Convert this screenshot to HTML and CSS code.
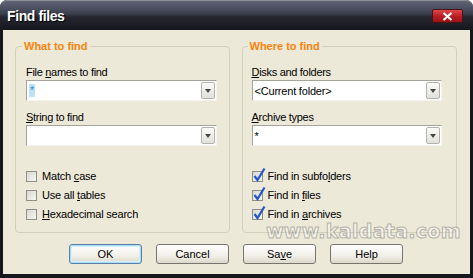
FILE: index.html
```html
<!DOCTYPE html>
<html lang="en">
<head>
  <meta charset="UTF-8" />
  <title>Find files</title>
  <link rel="stylesheet" href="styles.css">
</head>
<body>
  <div class="window">
    <div class="titlebar">
      <span class="title">Find files</span>
      <button class="close" aria-label="Close">
        <svg width="11" height="9" viewBox="0 0 11 9"><path d="M1.5 1 L9.5 8 M9.5 1 L1.5 8" stroke="#fff" stroke-width="2.2" fill="none"/></svg>
      </button>
    </div>

    <div class="client">
      <div class="groups">
        <fieldset class="group what">
          <legend>What to find</legend>
          <div class="field">
            <label class="field-label">File <u>n</u>ames to find</label>
            <div class="combo"><span class="value"><span class="sel">*</span></span><span class="drop"></span></div>
          </div>
          <div class="field">
            <label class="field-label"><u>S</u>tring to find</label>
            <div class="combo"><span class="value"></span><span class="drop"></span></div>
          </div>
          <div class="checks">
            <label class="check"><span class="box"></span><span>Match <u>c</u>ase</span></label>
            <label class="check"><span class="box"></span><span>Use all <u>t</u>ables</span></label>
            <label class="check"><span class="box"></span><span><u>H</u>exadecimal search</span></label>
          </div>
        </fieldset>

        <fieldset class="group where">
          <legend>Where to find</legend>
          <div class="field">
            <label class="field-label"><u>D</u>isks and folders</label>
            <div class="combo"><span class="value">&lt;Current folder&gt;</span><span class="drop"></span></div>
          </div>
          <div class="field">
            <label class="field-label"><u>A</u>rchive types</label>
            <div class="combo"><span class="value">*</span><span class="drop"></span></div>
          </div>
          <div class="checks">
            <label class="check"><span class="box checked"><svg width="14" height="16" viewBox="0 0 14 16"><path d="M2.5 9 L5.5 13 L12.5 1.5" stroke="#2257c9" stroke-width="2.2" fill="none"/></svg></span><span>Find in subfo<u>l</u>ders</span></label>
            <label class="check"><span class="box checked"><svg width="14" height="16" viewBox="0 0 14 16"><path d="M2.5 9 L5.5 13 L12.5 1.5" stroke="#2257c9" stroke-width="2.2" fill="none"/></svg></span><span>Find in <u>f</u>iles</span></label>
            <label class="check"><span class="box checked"><svg width="14" height="16" viewBox="0 0 14 16"><path d="M2.5 9 L5.5 13 L12.5 1.5" stroke="#2257c9" stroke-width="2.2" fill="none"/></svg></span><span>Find in <u>a</u>rchives</span></label>
          </div>
        </fieldset>
      </div>

      <div class="buttons">
        <button class="btn default">OK</button>
        <button class="btn">Cancel</button>
        <button class="btn">Sa<u>v</u>e</button>
        <button class="btn">Help</button>
      </div>
    </div>

    <div class="watermark">www.kaldata.com</div>
  </div>
</body>
</html>
```

FILE: styles.css
```css
* { box-sizing: border-box; }
body {
  margin: 0;
  background: #fff;
  font-family: "Liberation Sans", Arial, sans-serif;
  font-size: 11px;
  color: #000;
}
.window {
  position: relative;
  width: 473px;
  height: 278px;
  display: flex;
  flex-direction: column;
  padding: 0 3px 4px;
  background: #16171d;
  border-radius: 7px 7px 0 0;
}
.titlebar {
  height: 30px;
  flex: none;
  margin: 0 -3px;
  padding: 0 10px 0 7px;
  display: flex;
  align-items: flex-start;
  justify-content: space-between;
  border-top: 1px solid #8c8e98;
  border-radius: 7px 7px 0 0;
  background: linear-gradient(#5e6272 0, #4a4e5e 8px, #3a3d4a 13px, #25262f 16px, #17181e 29px);
}
.title {
  margin-top: 7px;
  line-height: 16px;
  font-size: 14px;
  font-weight: bold;
  letter-spacing: -0.4px;
  color: #fff;
  text-shadow: 1px 1px 0 #000;
}
.close {
  margin-top: 8px;
  width: 31px;
  height: 14px;
  padding: 0;
  display: flex;
  align-items: center;
  justify-content: center;
  border: 1px solid #4a1416;
  border-radius: 2px;
  background: linear-gradient(#e0484a, #b51d22 55%, #9c1217);
}
.client {
  flex: 1;
  padding: 10px 13px 10px 12px;
  background: #ece9d8;
}
.groups {
  display: flex;
  gap: 12px;
}
.group {
  flex: 1;
  min-width: 0;
  margin: 0;
  padding: 14px 12px 8px 10px;
  border: 1px solid #d0d0bf;
  border-radius: 4px;
}
.group.where { padding: 14px 14px 8px 9px; }
.group legend {
  margin-left: -4px;
  padding: 0 2px;
  line-height: 12px;
  font-weight: bold;
  color: #f7840e;
}
.field + .field { margin-top: 10px; }
.field-label {
  display: block;
  line-height: 13px;
  margin-bottom: 1px;
  letter-spacing: -0.3px;
}
.combo {
  height: 21px;
  padding: 1px;
  display: flex;
  align-items: center;
  background: #fff;
  border: 1px solid;
  border-color: #a5a49c #f4f3ee #f4f3ee #a5a49c;
}
.combo .value {
  flex: 1;
  padding-left: 1px;
  letter-spacing: -0.2px;
}
.combo .sel {
  display: inline-block;
  padding: 0 1px;
  line-height: 13px;
  background: #bde2f6;
  color: #3587d4;
}
.drop {
  width: 14px;
  height: 17px;
  display: flex;
  align-items: center;
  justify-content: center;
  border: 1px solid #b4b3ab;
  border-radius: 2px;
  background: linear-gradient(#fbfbfa, #e1e0da);
}
.drop::after {
  content: "";
  border-top: 4px solid #474747;
  border-left: 3.5px solid transparent;
  border-right: 3.5px solid transparent;
}
.checks { margin-top: 21px; }
.check {
  height: 19px;
  display: flex;
  align-items: center;
  gap: 5px;
  line-height: 13px;
  letter-spacing: -0.2px;
}
.box {
  position: relative;
  width: 11px;
  height: 11px;
  flex: none;
  border: 1px solid #8f8f8a;
  background: linear-gradient(135deg, #d9d8cf, #f7f7f4);
}
.box svg {
  position: absolute;
  left: -1px;
  top: -5px;
}
.buttons {
  margin-top: 11px;
  display: flex;
  justify-content: center;
  gap: 14px;
}
.btn {
  width: 73px;
  height: 20px;
  padding: 0;
  font: inherit;
  color: #000;
  border: 1px solid #77766e;
  border-radius: 3px;
  background: linear-gradient(#ffffff, #f1efe8 60%, #dcd8ca);
}
.btn.default {
  border-color: #5b7fa6;
  box-shadow: inset 0 0 0 1px #a8ddf6, inset 0 0 0 2px #d5f0fb;
}
.watermark {
  position: absolute;
  left: 266px;
  top: 221px;
  font-family: "DejaVu Sans", sans-serif;
  font-size: 19px;
  font-weight: bold;
  line-height: 20px;
  letter-spacing: 0.3px;
  color: rgba(255, 255, 255, 0.45);
  -webkit-text-stroke: 1px rgba(150, 148, 140, 0.7);
}
```
